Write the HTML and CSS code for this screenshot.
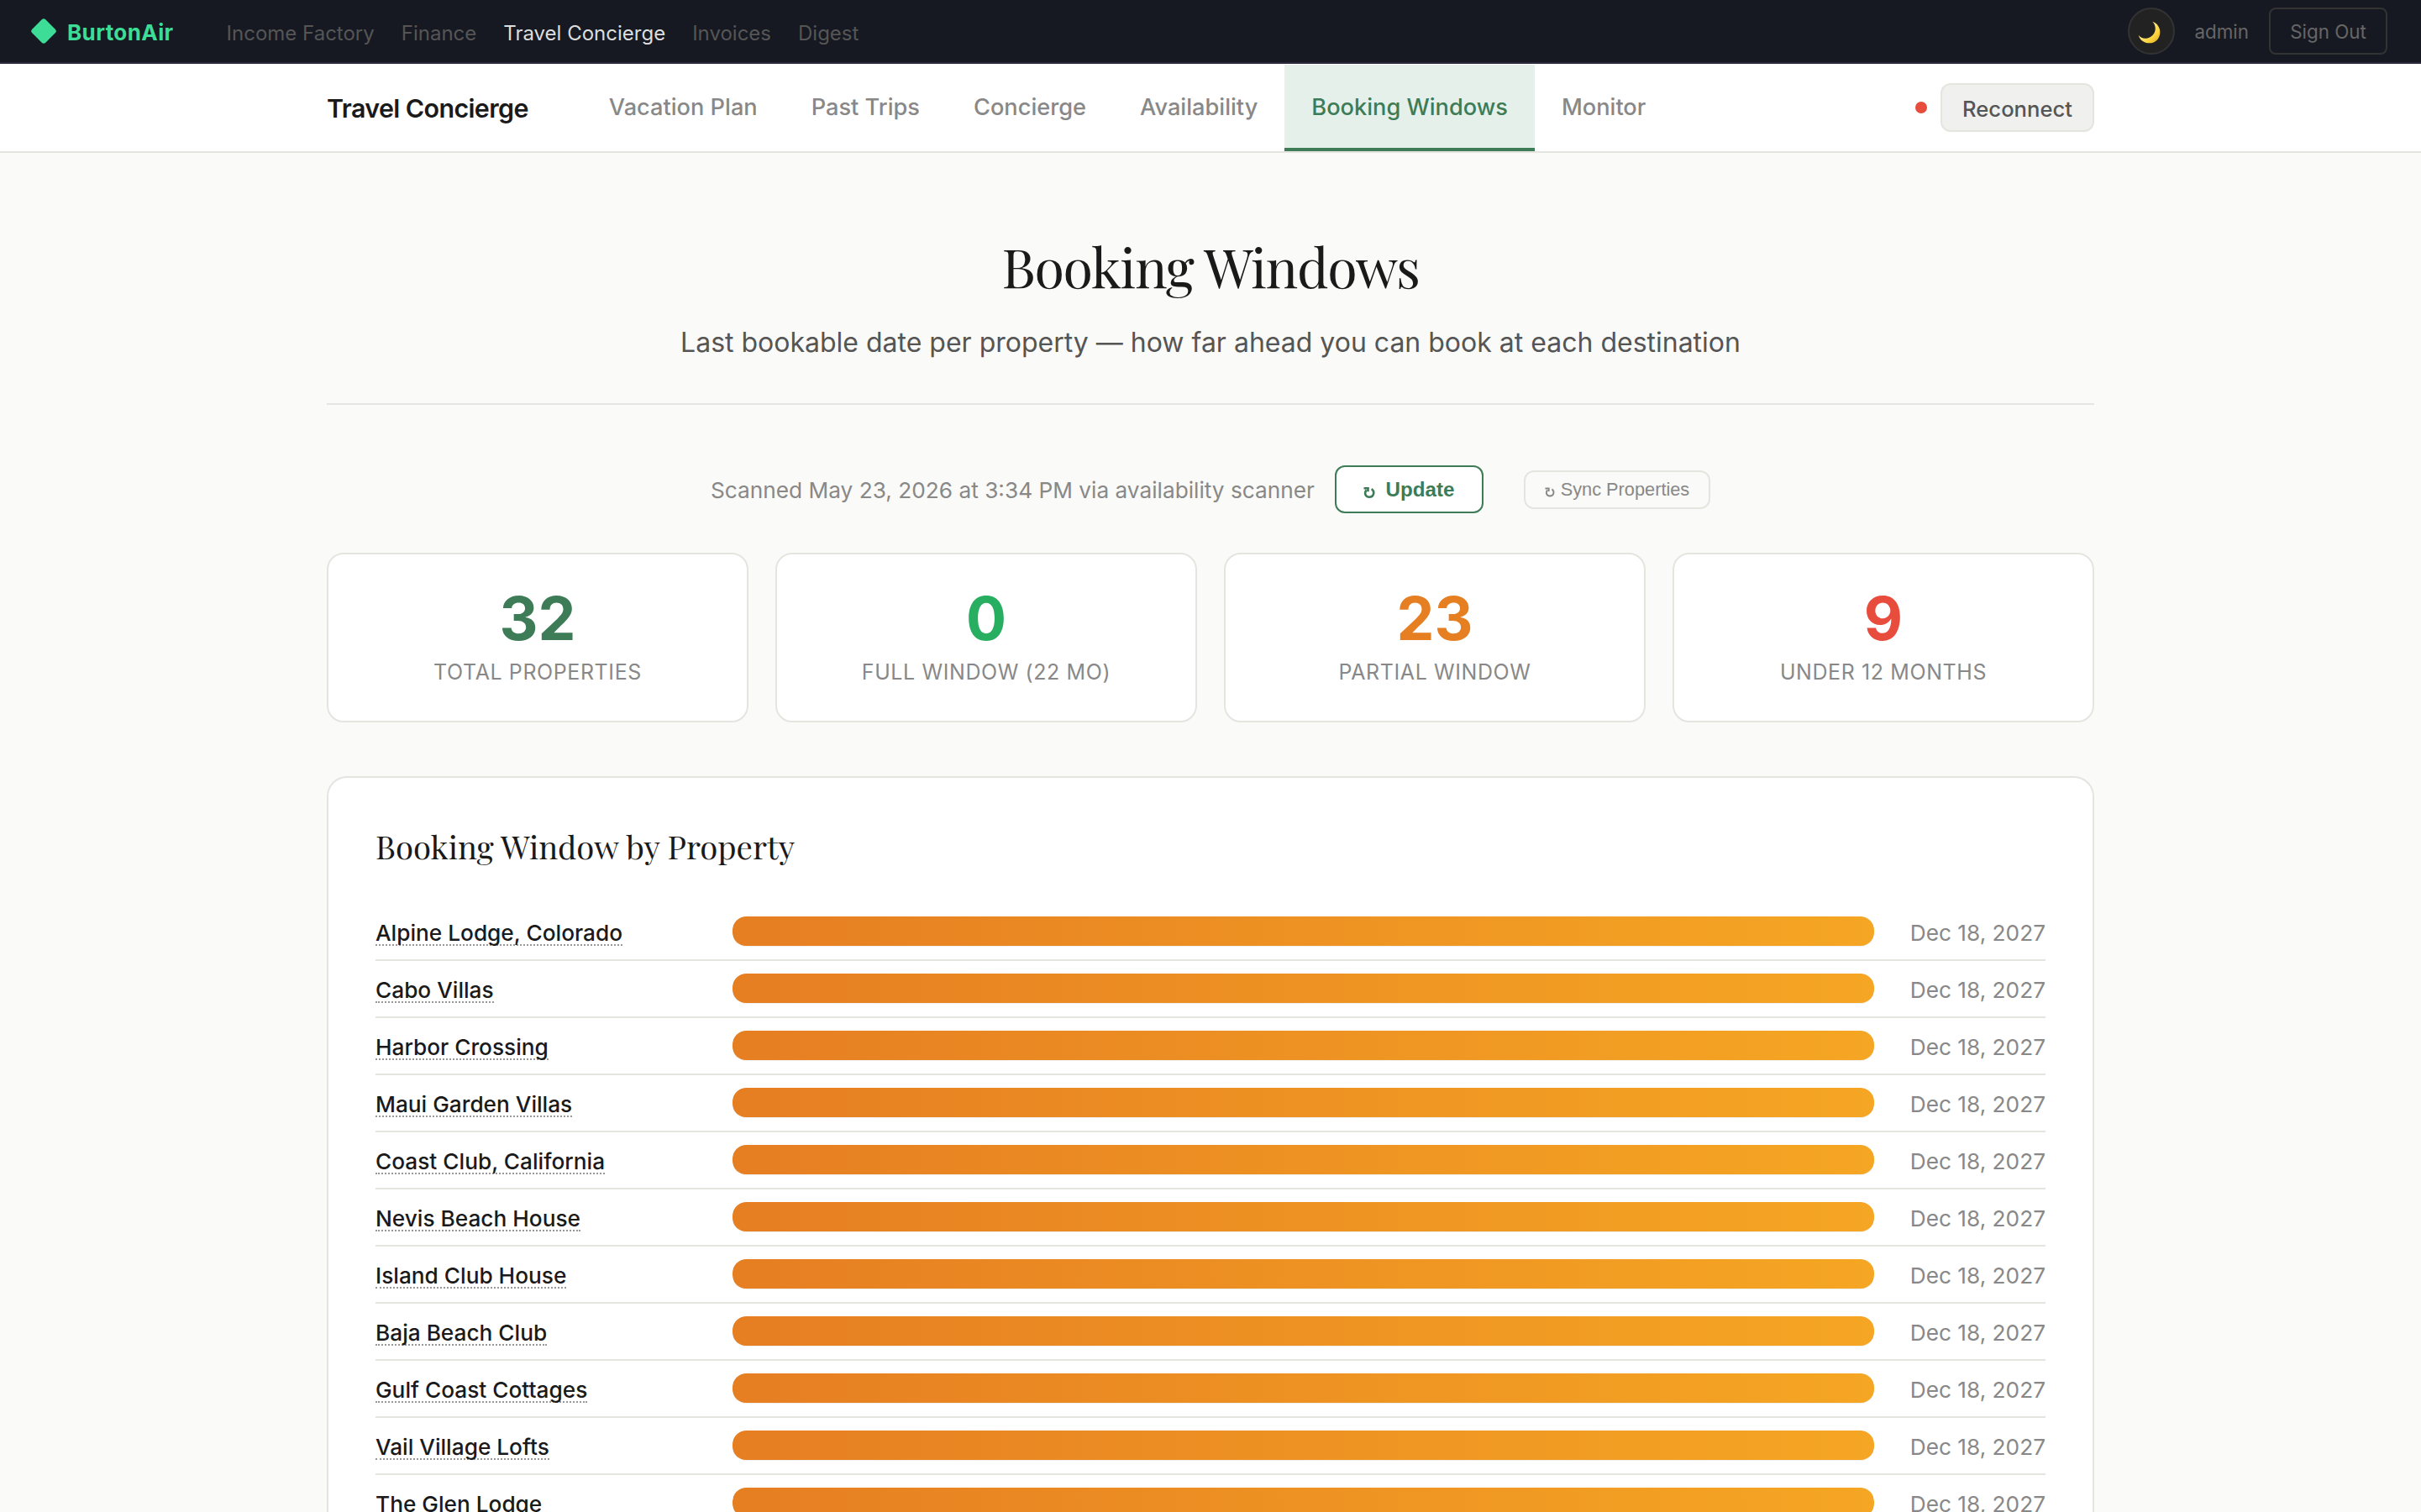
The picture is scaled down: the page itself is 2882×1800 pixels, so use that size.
FILE: index.html
```html
<!DOCTYPE html>
<html lang="en">
<head>
<meta charset="utf-8">
<title>Booking Windows</title>
<link rel="stylesheet" href="styles.css">
</head>
<body>
<header class="topbar">
  <a class="logo"><svg class="logo-mark" viewBox="0 0 32 32"><rect x="4.7" y="4.7" width="22.6" height="22.6" rx="3.2" transform="rotate(45 16 16)" fill="#3ddc97"/></svg><span>BurtonAir</span></a>
  <nav class="apps"><a>Income Factory</a><a>Finance</a><a class="current">Travel Concierge</a><a>Invoices</a><a>Digest</a></nav>
  <div class="account">
    <button class="theme" aria-label="Theme"><svg viewBox="136 73 82 82"><defs><linearGradient id="moon" x1="0" y1="0" x2="1" y2="1"><stop offset="0.35" stop-color="#ffe88a"/><stop offset="0.7" stop-color="#fcd33c"/><stop offset="1" stop-color="#d9a520"/></linearGradient></defs><path d="M188 75C205 80 216 95 216 113C216 136 200 153 177 153C158 153 143 142 138 124C146 134 158 138 170 135C190 131 203 112 198 92C196 84 193 79 188 75Z" fill="url(#moon)"/></svg></button>
    <span class="user">admin</span>
    <button class="signout">Sign Out</button>
  </div>
</header>
<div class="subnav">
  <div class="subnav-inner">
    <span class="section">Travel Concierge</span>
    <nav class="tabs"><a>Vacation Plan</a><a>Past Trips</a><a>Concierge</a><a>Availability</a><a class="active">Booking Windows</a><a>Monitor</a></nav>
    <div class="status"><i class="dot"></i><button class="reconnect">Reconnect</button></div>
  </div>
</div>
<main class="page">
  <div class="hero">
    <h1>Booking Windows</h1>
    <p>Last bookable date per property — how far ahead you can book at each destination</p>
  </div>
  <div class="toolbar">
    <span class="scanned">Scanned May 23, 2026 at 3:34 PM via availability scanner</span>
    <button class="update"><svg class="turn" viewBox="0 0 14 13"><path d="M0.5 1.2H5.5V5.2M3.6 3.4C0.6 7.4 2.6 11.7 7 11.7C12.4 11.7 14 5.4 9.8 2" fill="none" stroke="currentColor" stroke-width="2.6"/></svg><span>Update</span></button>
    <button class="sync"><svg class="turn" viewBox="0 0 14 13"><path d="M0.5 1.2H5.5V5.2M3.6 3.4C0.6 7.4 2.6 11.7 7 11.7C12.4 11.7 14 5.4 9.8 2" fill="none" stroke="currentColor" stroke-width="2.2"/></svg><span>Sync Properties</span></button>
  </div>
  <section class="stats">
    <div class="stat"><b class="total">32</b><span>Total Properties</span></div>
    <div class="stat"><b class="full">0</b><span>Full Window (22 mo)</span></div>
    <div class="stat"><b class="partial">23</b><span>Partial Window</span></div>
    <div class="stat"><b class="under">9</b><span>Under 12 Months</span></div>
  </section>
  <section class="panel">
    <h2>Booking Window by Property</h2>
    <div class="row"><div class="name"><a>Alpine Lodge, Colorado</a></div><div class="track"><div class="fill"></div></div><span class="date">Dec 18, 2027</span></div>
    <div class="row"><div class="name"><a>Cabo Villas</a></div><div class="track"><div class="fill"></div></div><span class="date">Dec 18, 2027</span></div>
    <div class="row"><div class="name"><a>Harbor Crossing</a></div><div class="track"><div class="fill"></div></div><span class="date">Dec 18, 2027</span></div>
    <div class="row"><div class="name"><a>Maui Garden Villas</a></div><div class="track"><div class="fill"></div></div><span class="date">Dec 18, 2027</span></div>
    <div class="row"><div class="name"><a>Coast Club, California</a></div><div class="track"><div class="fill"></div></div><span class="date">Dec 18, 2027</span></div>
    <div class="row"><div class="name"><a>Nevis Beach House</a></div><div class="track"><div class="fill"></div></div><span class="date">Dec 18, 2027</span></div>
    <div class="row"><div class="name"><a>Island Club House</a></div><div class="track"><div class="fill"></div></div><span class="date">Dec 18, 2027</span></div>
    <div class="row"><div class="name"><a>Baja Beach Club</a></div><div class="track"><div class="fill"></div></div><span class="date">Dec 18, 2027</span></div>
    <div class="row"><div class="name"><a>Gulf Coast Cottages</a></div><div class="track"><div class="fill"></div></div><span class="date">Dec 18, 2027</span></div>
    <div class="row"><div class="name"><a>Vail Village Lofts</a></div><div class="track"><div class="fill"></div></div><span class="date">Dec 18, 2027</span></div>
    <div class="row"><div class="name"><a>The Glen Lodge</a></div><div class="track"><div class="fill"></div></div><span class="date">Dec 18, 2027</span></div>
  </section>
</main>
</body>
</html>
```
FILE: styles.css
```css
* { box-sizing: border-box; margin: 0; padding: 0; }
html, body { height: 1800px; overflow: hidden; }
body { background: #fafaf8; color: #1a1a1a; font-family: Inter, "Liberation Sans", sans-serif; }
button { font-family: inherit; background: none; border: 2px solid; display: flex; align-items: center; justify-content: center; white-space: nowrap; }
a, span { white-space: nowrap; }

.topbar { height: 76px; background: #161922; border-bottom: 2px solid #2a2a3a; display: flex; align-items: center; padding: 0 40px 0 36px; }
.logo { display: flex; align-items: center; gap: 12px; color: #3ddc97; font-size: 26px; font-weight: 700; letter-spacing: 0.4px; line-height: 32px; }
.logo span { padding-top: 3px; }
.logo-mark { width: 32px; height: 32px; }
.apps { display: flex; gap: 32px; margin-left: 63px; padding-top: 6px; font-size: 24px; line-height: 30px; color: #555; }
.apps .current { color: #ddd; }
.account { margin-left: auto; display: flex; align-items: center; gap: 24px; font-size: 22.4px; color: #666; }
.theme { width: 56px; height: 56px; border-radius: 50%; background: #222; border-color: #333; padding-right: 5px; padding-top: 2px; margin-right: -1px; }
.theme svg { width: 27px; height: 27px; }
.signout { width: 141px; height: 56px; border-color: #333; border-radius: 8px; font-size: 22.4px; color: #666; }

.subnav { height: 106px; background: #fff; border-bottom: 2px solid #e5e5e0; }
.subnav-inner { width: 2104px; height: 104px; margin: 0 auto; display: flex; align-items: center; }
.section { font-size: 30.4px; font-weight: 600; letter-spacing: -0.6px; padding-top: 2px; }
.tabs { display: flex; align-self: stretch; margin-left: 64px; padding-top: 1px; font-size: 27.2px; font-weight: 500; color: #888; }
.tabs a { display: flex; align-items: center; padding: 2px 32px 0; border-bottom: 4px solid transparent; }
.tabs .active { background: #e6f0ea; color: #3d7c56; border-bottom-color: #3d7c56; }
.status { margin-left: auto; display: flex; align-items: center; gap: 16px; }
.dot { width: 14px; height: 14px; border-radius: 50%; background: #e74c3c; }
.reconnect { width: 183px; height: 58px; border-color: #e5e5e0; border-radius: 12px; background: #f0f0ee; color: #555; font-size: 25.6px; font-weight: 500; padding-top: 3px; }

.page { width: 2104px; margin: 0 auto; padding-top: 95px; }
.hero { text-align: center; padding-bottom: 46px; border-bottom: 2px solid #e5e5e3; }
h1 { font: 400 64.7px/78px "Playfair Display", "Liberation Serif", serif; letter-spacing: -1.29px; }
.hero p { margin-top: 27px; font-size: 32px; line-height: 52px; color: #555; }

.toolbar { height: 57px; margin-top: 72px; display: flex; align-items: center; justify-content: center; }
.scanned { font-size: 26.24px; color: #888; padding-top: 2px; }
.update, .sync { font-family: "Liberation Sans", sans-serif; border-radius: 12px; }
.update { width: 177px; height: 57px; margin-left: 24px; border-color: #3d7c56; background: #fff; color: #3d7c56; font-size: 24.2px; font-weight: 700; gap: 12px; padding-top: 1px; }
.sync { width: 222px; height: 46px; margin-left: 48px; border-color: #e5e5e0; color: #888; font-size: 21.76px; gap: 7px; padding-top: 1px; }
.update .turn { width: 14px; height: 13px; margin-top: 6px; }
.sync .turn { width: 12px; height: 12px; margin-top: 5px; }

.stats { margin-top: 47px; display: grid; grid-template-columns: repeat(4, 1fr); gap: 32px; }
.stat { height: 202px; background: #fff; border: 2px solid #e5e5e0; border-radius: 20px; padding-top: 40px; display: flex; flex-direction: column; align-items: center; }
.stat b { font-size: 71.3px; line-height: 72px; font-weight: 700; }
.stat span { margin-top: 9px; font-size: 24.96px; line-height: 38px; letter-spacing: 0.62px; text-transform: uppercase; color: #888; }
.total { color: #3d7c56; }
.full { color: #27ae60; }
.partial { color: #e67e22; }
.under { color: #e74c3c; }

.panel { height: 900px; margin-top: 64px; background: #fff; border: 2px solid #e5e5e0; border-bottom: 0; border-radius: 24px 24px 0 0; padding: 56px 56px 0; }
h2 { font: 400 38.4px/50px "Playfair Display", "Liberation Serif", serif; margin-bottom: 44px; }
.row { height: 68px; display: flex; align-items: center; gap: 24px; border-bottom: 2px solid #e5e5e0; }
.name { width: 401px; display: flex; padding-top: 5px; }
.name a { font-size: 26.24px; font-weight: 500; line-height: 26px; border-bottom: 2px dotted #999; }
.track { width: 1359px; height: 36px; border-radius: 16px; background: #f0f0ee; overflow: hidden; }
.fill { height: 35px; border-radius: 16px; background: linear-gradient(90deg, #e67e22, #f5a623); }
.date { flex: 1; text-align: right; font-size: 26.24px; color: #888; padding-top: 2px; }
```
